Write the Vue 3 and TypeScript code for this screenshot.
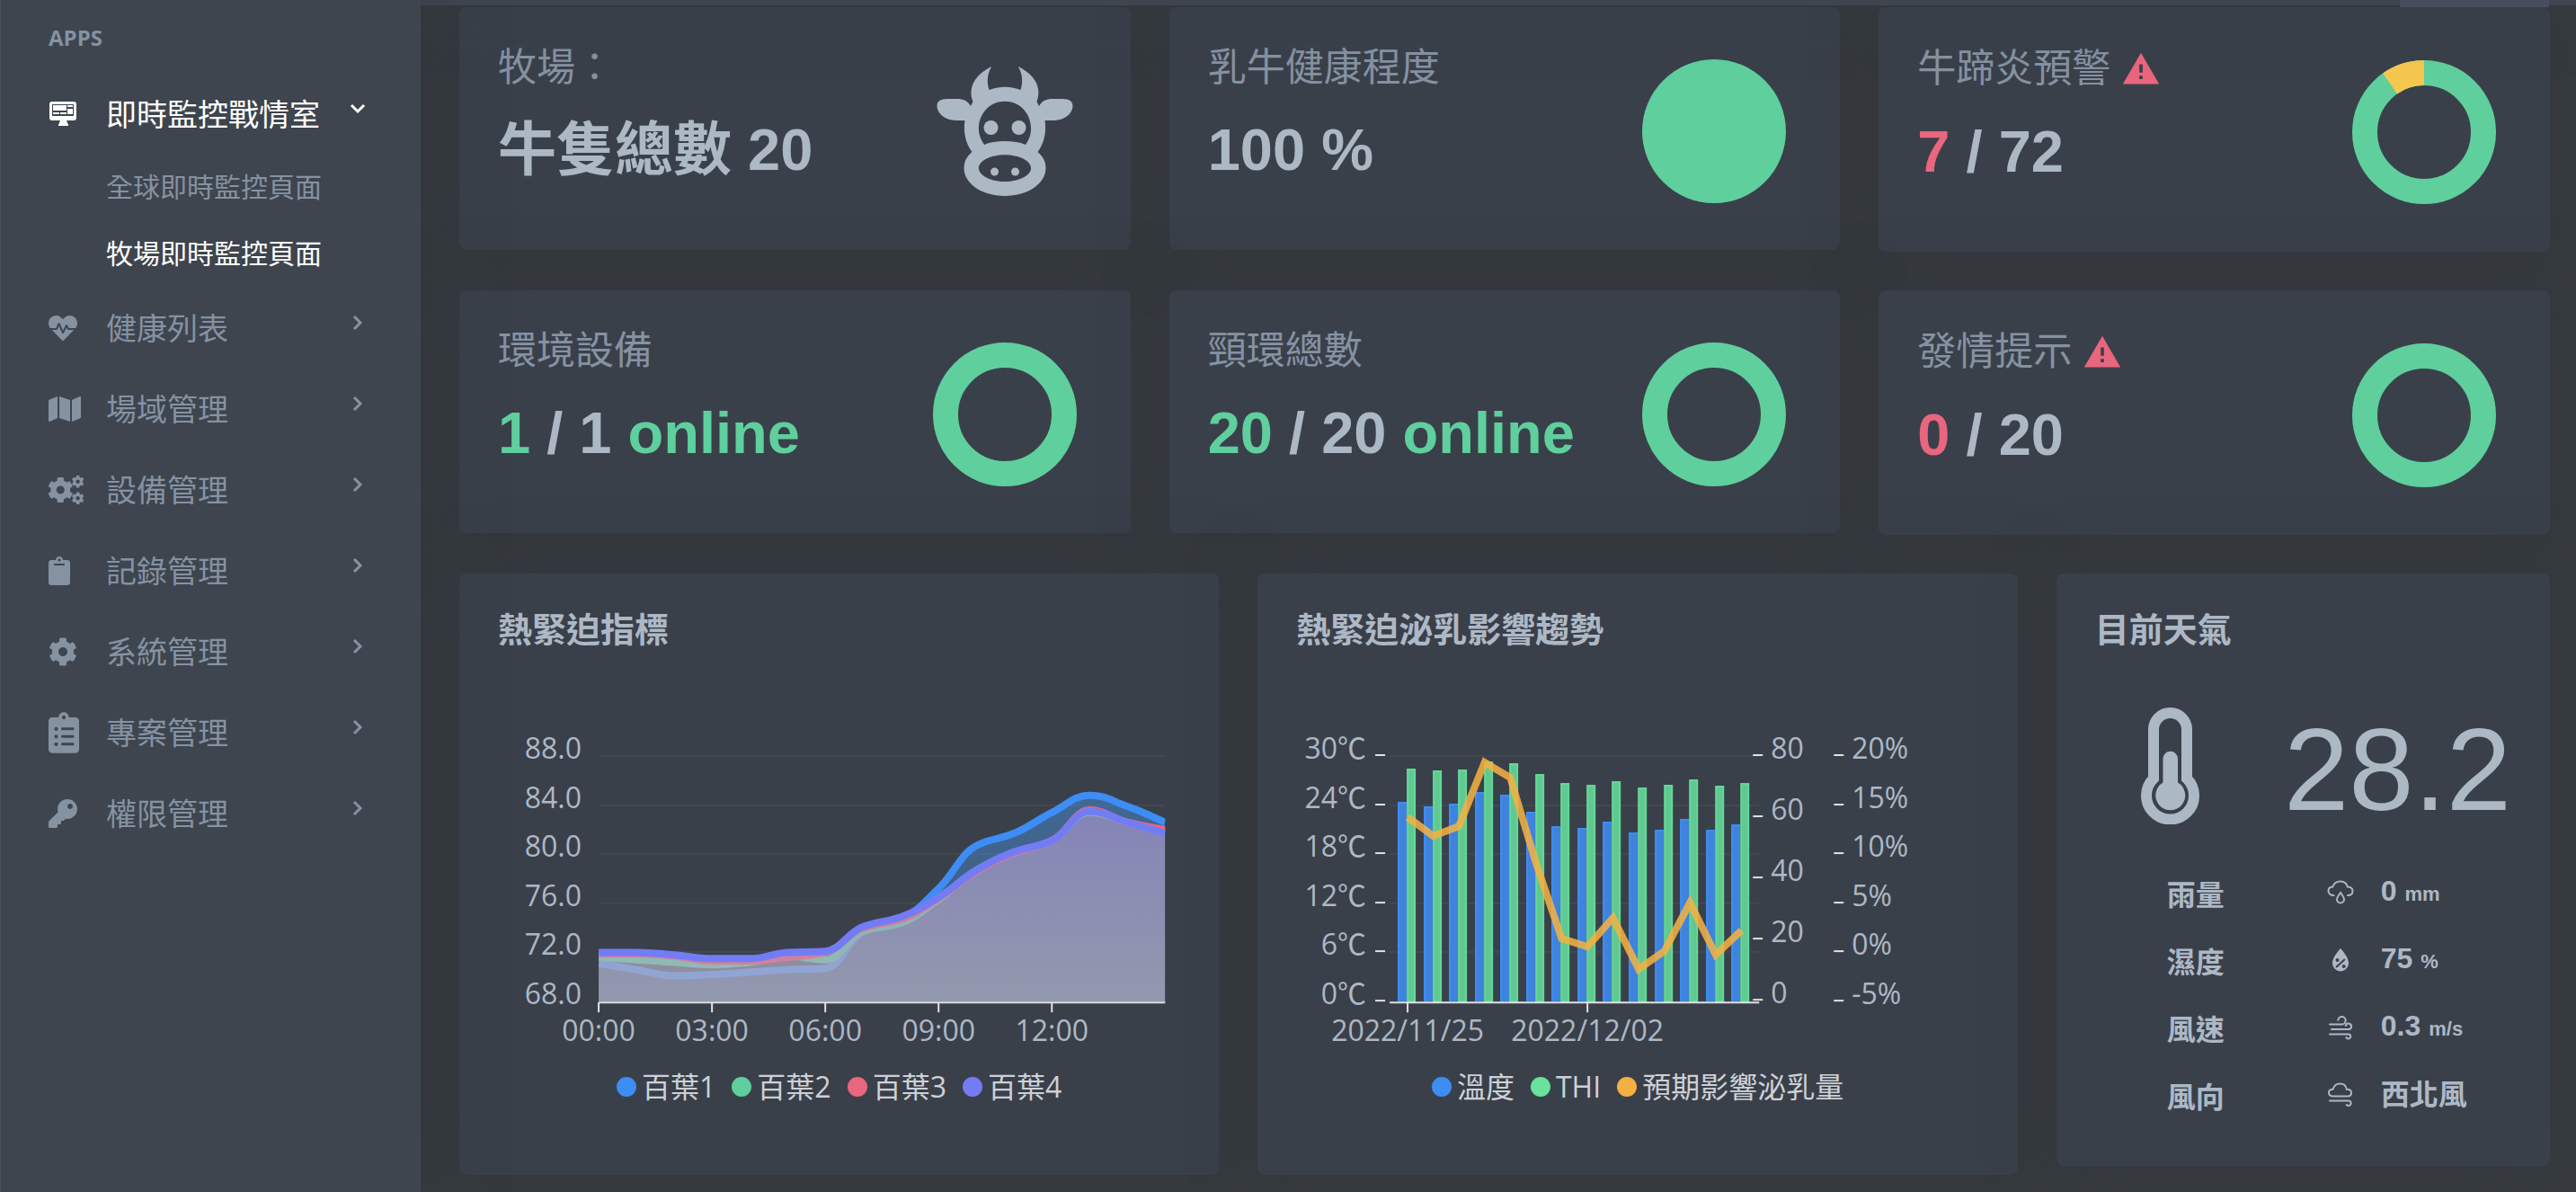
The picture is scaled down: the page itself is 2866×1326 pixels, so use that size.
<script setup lang="ts">
interface MenuItem {
  label: string
  icon: string
  width: number
  height: number
  viewBox: string
}

interface Stat {
  title: string
  alert?: boolean
  parts: { text: string; tone?: 'ok' | 'bad' }[]
  chart: 'cow' | 'disc' | 'ring'
  share?: number
}

type Point = [number, number]

const COG =
  'M487.4 315.7l-42.6-24.6c4.3-23.2 4.3-47 0-70.2l42.6-24.6c4.9-2.8 7.1-8.6 5.5-14-11.1-35.6-30-67.8-54.7-94.6-3.8-4.1-10-5.1-14.8-2.3L380.8 110c-17.9-15.4-38.5-27.3-60.8-35.1V25.8c0-5.6-3.9-10.5-9.4-11.7-36.7-8.2-74.3-7.8-109.2 0-5.5 1.2-9.4 6.1-9.4 11.7V75c-22.2 7.9-42.8 19.8-60.8 35.1L88.7 85.5c-4.9-2.8-11-1.9-14.8 2.3-24.7 26.7-43.6 58.9-54.7 94.6-1.7 5.4.6 11.2 5.5 14L67.3 221c-4.3 23.2-4.3 47 0 70.2l-42.6 24.6c-4.9 2.8-7.1 8.6-5.5 14 11.1 35.6 30 67.8 54.7 94.6 3.8 4.1 10 5.1 14.8 2.3l42.6-24.6c17.9 15.4 38.5 27.3 60.8 35.1v49.2c0 5.6 3.9 10.5 9.4 11.7 36.7 8.2 74.3 7.8 109.2 0 5.5-1.2 9.4-6.1 9.4-11.7v-49.2c22.2-7.9 42.8-19.8 60.8-35.1l42.6 24.6c4.9 2.8 11 1.9 14.8-2.3 24.7-26.7 43.6-58.9 54.7-94.6 1.5-5.5-.7-11.3-5.6-14.1zM256 336c-44.1 0-80-35.9-80-80s35.9-80 80-80 80 35.9 80 80-35.9 80-80 80z'

const menu: MenuItem[] = [
  {
    label: '健康列表',
    width: 32,
    height: 32,
    viewBox: '0 0 512 512',
    icon: 'M320.2 243.8l-49.7 99.4c-6 12.1-23.4 11.7-28.9-.6l-56.9-126.3-30 71.7H60.6l182.5 186.5c7.1 7.3 18.6 7.3 25.7 0L451.4 288H342.3l-22.1-44.2zM473.7 73.9l-2.4-2.5c-51.5-52.6-135.8-52.6-187.4 0L256 100l-27.9-28.5c-51.5-52.7-135.9-52.7-187.4 0l-2.4 2.4C-10.4 123.7-12.5 203 31 256h102.4l35.9-86.2c5.4-12.9 23.6-13.1 29.3-.4l58.2 129.3 49-97.9c5.9-11.8 22.7-11.8 28.6 0l27.6 55.2H481c43.5-53 41.4-132.3-7.3-182.1z',
  },
  {
    label: '場域管理',
    width: 36,
    height: 32,
    viewBox: '0 0 576 512',
    icon: 'M0 117.66v346.32c0 11.32 11.43 19.06 21.94 14.86L160 416V32L20.12 87.95A32.006 32.006 0 0 0 0 117.66zM192 416l192 64V96L192 32v384zM554.06 33.16L416 96v384l139.88-55.95A31.996 31.996 0 0 0 576 394.34V48.02c0-11.32-11.43-19.06-21.94-14.86z',
  },
  { label: '設備管理', width: 40, height: 32, viewBox: '0 0 40 32', icon: 'cogs' },
  {
    label: '記錄管理',
    width: 24,
    height: 32,
    viewBox: '0 0 384 512',
    icon: 'M384 112v352c0 26.51-21.49 48-48 48H48c-26.51 0-48-21.49-48-48V112c0-26.51 21.49-48 48-48h80c0-35.29 28.71-64 64-64s64 28.71 64 64h80c26.51 0 48 21.49 48 48zM192 40c-13.255 0-24 10.745-24 24s10.745 24 24 24 24-10.745 24-24-10.745-24-24-24m96 114v-20a6 6 0 0 0-6-6H102a6 6 0 0 0-6 6v20a6 6 0 0 0 6 6h180a6 6 0 0 0 6-6z',
  },
  { label: '系統管理', width: 32, height: 32, viewBox: '0 0 512 512', icon: COG },
  {
    label: '專案管理',
    width: 34,
    height: 46,
    viewBox: '0 0 384 512',
    icon: 'M336 64h-80c0-35.3-28.7-64-64-64s-64 28.7-64 64H48C21.5 64 0 85.5 0 112v352c0 26.5 21.5 48 48 48h288c26.5 0 48-21.5 48-48V112c0-26.5-21.5-48-48-48zM96 424c-13.3 0-24-10.7-24-24s10.7-24 24-24 24 10.7 24 24-10.7 24-24 24zm0-96c-13.3 0-24-10.7-24-24s10.7-24 24-24 24 10.7 24 24-10.7 24-24 24zm0-96c-13.3 0-24-10.7-24-24s10.7-24 24-24 24 10.7 24 24-10.7 24-24 24zm96-192c13.3 0 24 10.7 24 24s-10.7 24-24 24-24-10.7-24-24 10.7-24 24-24zm128 368c0 4.4-3.6 8-8 8H168c-4.4 0-8-3.6-8-8v-16c0-4.4 3.6-8 8-8h144c4.4 0 8 3.6 8 8v16zm0-96c0 4.4-3.6 8-8 8H168c-4.4 0-8-3.6-8-8v-16c0-4.4 3.6-8 8-8h144c4.4 0 8 3.6 8 8v16zm0-96c0 4.4-3.6 8-8 8H168c-4.4 0-8-3.6-8-8v-16c0-4.4 3.6-8 8-8h144c4.4 0 8 3.6 8 8v16z',
  },
  {
    label: '權限管理',
    width: 32,
    height: 32,
    viewBox: '0 0 512 512',
    icon: 'M512 176.001C512 273.203 433.202 352 336 352c-11.22 0-22.19-1.062-32.827-3.069l-24.012 27.014A23.999 23.999 0 0 1 261.223 384H224v40c0 13.255-10.745 24-24 24h-40v40c0 13.255-10.745 24-24 24H24c-13.255 0-24-10.745-24-24v-78.059c0-6.365 2.529-12.47 7.029-16.971l161.802-161.802C163.108 213.814 160 195.271 160 176 160 78.798 238.797.001 335.999 0 433.488-.001 512 78.511 512 176.001zM336 128c0 26.51 21.49 48 48 48s48-21.49 48-48-21.49-48-48-48-48 21.49-48 48z',
  },
]

const stats: Stat[] = [
  { title: '牧場：', parts: [{ text: '牛隻總數 20' }], chart: 'cow' },
  { title: '乳牛健康程度', parts: [{ text: '100 %' }], chart: 'disc' },
  {
    title: '牛蹄炎預警',
    alert: true,
    parts: [{ text: '7', tone: 'bad' }, { text: ' / 72' }],
    chart: 'ring',
    share: 7 / 72,
  },
  {
    title: '環境設備',
    parts: [{ text: '1', tone: 'ok' }, { text: ' / 1 ' }, { text: 'online', tone: 'ok' }],
    chart: 'ring',
  },
  {
    title: '頸環總數',
    parts: [{ text: '20', tone: 'ok' }, { text: ' / 20 ' }, { text: 'online', tone: 'ok' }],
    chart: 'ring',
  },
  {
    title: '發情提示',
    alert: true,
    parts: [{ text: '0', tone: 'bad' }, { text: ' / 20' }],
    chart: 'ring',
  },
]

/* Slice of the ring that ends at twelve o'clock, running counter-clockwise. */
function slice(share: number): string {
  const a = -Math.PI / 2 - share * Math.PI * 2
  const at = (r: number) => `${80 + r * Math.cos(a)} ${80 + r * Math.sin(a)}`
  return `M${at(80)}A80 80 0 0 1 80 0V28A52 52 0 0 0 ${at(52)}Z`
}

/* Heat index chart: plot area 155..785 by 41..314. */
const yTicks = ['88.0', '84.0', '80.0', '76.0', '72.0', '68.0']
const xTicks = ['00:00', '03:00', '06:00', '09:00', '12:00']
const rowY = (i: number) => Math.round(41 + i * 54.6)

const heat = [
  { name: '百葉1', color: '#3d8df5', fill: 'url(#fill1)', values: [71.1, 70.6, 70.1, 70.2, 70.4, 70.6, 70.7, 73.7, 74.7, 77.2, 80.7, 81.7, 83.4, 84.8, 83.9, 82.6] },
  { name: '百葉2', color: '#5fcf9d', fill: 'url(#fill2)', values: [71.6, 71.4, 71.2, 71.0, 71.2, 71.7, 71.4, 73.7, 74.4, 76.3, 78.7, 80.1, 81.1, 83.4, 82.6, 81.8] },
  { name: '百葉3', color: '#e8667e', fill: 'url(#fill3)', values: [71.9, 71.9, 71.7, 71.3, 71.3, 71.6, 72.0, 74.0, 74.7, 76.4, 78.6, 80.1, 81.1, 83.6, 82.6, 82.0] },
  { name: '百葉4', color: '#727cf5', fill: 'url(#fill4)', values: [72.0, 72.0, 71.8, 71.5, 71.5, 72.0, 72.1, 74.1, 74.9, 76.5, 78.7, 80.2, 81.1, 83.5, 82.6, 81.7] },
]

/* Monotone cubic curve through the points, so that it never overshoots. */
function smooth(p: Point[]): string {
  const n = p.length
  const d = p.slice(1).map((q, i) => (q[1] - p[i][1]) / (q[0] - p[i][0]))
  const m = p.map((_, i) => {
    if (i === 0) return d[0]
    if (i === n - 1) return d[n - 2]
    if (d[i - 1] * d[i] <= 0) return 0
    return (2 * d[i - 1] * d[i]) / (d[i - 1] + d[i])
  })
  let s = `M${p[0][0]} ${p[0][1]}`
  for (let i = 0; i < n - 1; i++) {
    const h = (p[i + 1][0] - p[i][0]) / 2.4
    s += `C${p[i][0] + h} ${p[i][1] + m[i] * h} ${p[i + 1][0] - h} ${p[i + 1][1] - m[i + 1] * h} ${p[i + 1][0]} ${p[i + 1][1]}`
  }
  return s
}

const curves = heat.map((s) => {
  const pts = s.values.map((v, i): Point => [155 + i * 42, 314 - (v - 68) * 13.65])
  const line = smooth(pts)
  return { ...s, line, area: `${line}V314H155Z` }
})

/* Milk yield chart: bar tops and line points in plot units. */
const leftTicks = ['30℃', '24℃', '18℃', '12℃', '6℃', '0℃']
const midTicks = ['80', '60', '40', '20', '0']
const rightTicks = ['20%', '15%', '10%', '5%', '0%', '-5%']
const temperature = [92, 97, 94, 81, 84, 103, 119, 121, 114, 126, 123, 111, 123, 117]
const thi = [55, 57, 56, 47, 49, 61, 71, 73, 69, 76, 73, 67, 74, 71]
const milk = [109, 130, 119, 48, 65, 160, 244, 253, 221, 278, 258, 204, 262, 235]
const barX = (i: number) => Math.round(156 + i * 28.55)
const milkLine = milk.map((y, i) => `${167 + i * 28.55},${y}`).join(' ')
const milkLegend = [
  { name: '溫度', color: '#3d8df5' },
  { name: 'THI', color: '#68e29c' },
  { name: '預期影響泌乳量', color: '#f4b143' },
]

const weather = [
  { label: '雨量', icon: 'rain', value: '0', unit: 'mm' },
  { label: '濕度', icon: 'humidity', value: '75', unit: '%' },
  { label: '風速', icon: 'wind', value: '0.3', unit: 'm/s' },
  { label: '風向', icon: 'cloud', value: '西北風', unit: '' },
]
</script>

<template>
  <div class="page">
    <nav class="sidebar">
      <h2 class="group">APPS</h2>
      <ul class="menu">
        <li>
          <a href="#live" class="item active">
            <span class="icon">
              <svg width="32" height="28" viewBox="0 0 32 28" fill="currentColor">
                <path fill-rule="evenodd" d="M4 0H28a3 3 0 0 1 3 3V18a3 3 0 0 1-3 3H4a3 3 0 0 1-3-3V3a3 3 0 0 1 3-3ZM4 3V16H28V3Z" />
                <path d="M5 4H20V10H5ZM21 4H27V6H21ZM21 8H27V14H21ZM5 12H12V14H5ZM13 12H20V14H13ZM13 21h7l2 5v1H11v-1Z" />
              </svg>
            </span>
            <span class="label">即時監控戰情室</span>
            <svg class="chevron" width="20" height="20" viewBox="0 0 20 20"><path d="M3 6l7 7 7-7" /></svg>
          </a>
          <ul class="submenu">
            <li><a href="#global">全球即時監控頁面</a></li>
            <li><a href="#farm" class="active">牧場即時監控頁面</a></li>
          </ul>
        </li>
        <li v-for="m in menu" :key="m.label">
          <a href="#" class="item">
            <span class="icon">
              <svg :width="m.width" :height="m.height" :viewBox="m.viewBox" fill="currentColor">
                <g v-if="m.icon === 'cogs'">
                  <path :d="COG" transform="translate(-1.2 1.5) scale(.0565)" />
                  <path :d="COG" transform="translate(25.6 -.3) scale(.0275)" />
                  <path :d="COG" transform="translate(25.6 18.2) scale(.0275)" />
                </g>
                <path v-else :d="m.icon" />
              </svg>
            </span>
            <span class="label">{{ m.label }}</span>
            <svg class="chevron" width="20" height="20" viewBox="0 0 20 20"><path d="M6 3l7 7-7 7" /></svg>
          </a>
        </li>
      </ul>
    </nav>

    <div class="content">
      <header class="topbar"><div class="topbar-user"></div></header>
      <main class="board">
        <section v-for="s in stats" :key="s.title" class="card stat">
          <div>
            <h3 class="stat-title">
              {{ s.title }}
              <svg v-if="s.alert" class="alert" width="44" height="44" viewBox="0 0 24 24">
                <path d="M13 14H11V9H13M13 18H11V16H13M1 21H23L12 2L1 21Z" />
              </svg>
            </h3>
            <p class="stat-value"><span v-for="(p, i) in s.parts" :key="i" :class="p.tone">{{ p.text }}</span></p>
          </div>
          <svg v-if="s.chart === 'cow'" class="gauge cow" viewBox="0 0 160 160">
            <g transform="translate(4.5 8)">
              <path
                fill-rule="evenodd"
                d="M60.700 0C42 9 34 24 40 39L37.500 44C34 38 29 36 23 36H12C3 36 0 39 0 44C0 51 8 60 21 60H31C29 73 32 86 39 95C33 100 30 106 30 113C30 130 50 144 75.500 144S121 130 121 113C121 106 118 100 112 95C119 86 122 73 120 60H130C143 60 151 51 151 44C151 39 148 36 139 36H128C122 36 117 38 113.500 44L111 39C117 24 109 9 90.300 0C95 8 96 17 93 26C88 24 82 22.700 75.500 22.700S63 24 58 26C55 17 56 8 60.700 0ZM75.500 38.700C92 38.700 104.600 52 104.600 69C104.600 76 102 82 98.500 87C92 84 84 83 75.500 83S59 84 52.600 87C49 82 46.400 76 46.400 69C46.400 52 59 38.700 75.500 38.700ZM75.500 98.300C91.500 98.300 104.600 105 104.600 113S91.500 128 75.500 128 46.400 121 46.400 113 59.500 98.300 75.500 98.300Z"
              />
              <circle cx="60" cy="68" r="8" /><circle cx="91" cy="68" r="8" />
              <circle cx="64" cy="117" r="4.500" /><circle cx="87" cy="117" r="4.500" />
            </g>
          </svg>
          <svg v-else class="gauge" viewBox="0 0 160 160">
            <circle v-if="s.chart === 'disc'" cx="80" cy="80" r="80" fill="#5fcf9d" />
            <circle v-else cx="80" cy="80" r="66" fill="none" stroke="#5fcf9d" stroke-width="28" />
            <path v-if="s.share" :d="slice(s.share)" fill="#f6c74e" />
          </svg>
        </section>

        <section class="card chart">
          <h3 class="card-title">熱緊迫指標</h3>
          <svg class="plot" viewBox="0 0 845 375">
            <defs>
              <linearGradient id="fill1" x2="0" y2="1">
                <stop offset="0" stop-color="#4790e0" stop-opacity=".5" />
                <stop offset="1" stop-color="#4790e0" stop-opacity=".3" />
              </linearGradient>
              <linearGradient id="fill2" x2="0" y2="1">
                <stop offset="0" stop-color="#90b8b8" stop-opacity=".25" />
                <stop offset="1" stop-color="#b0c8c8" stop-opacity=".3" />
              </linearGradient>
              <linearGradient id="fill3" x2="0" y2="1">
                <stop offset="0" stop-color="#c898a8" stop-opacity=".3" />
                <stop offset="1" stop-color="#c8a8b0" stop-opacity=".3" />
              </linearGradient>
              <linearGradient id="fill4" x2="0" y2="1">
                <stop offset="0" stop-color="#9a84dc" stop-opacity=".4" />
                <stop offset="1" stop-color="#b0b4cc" stop-opacity=".4" />
              </linearGradient>
              <clipPath id="plot1"><rect x="155" y="0" width="630" height="316" /></clipPath>
            </defs>
            <path v-for="(t, i) in yTicks" :key="t" class="grid" :d="`M155 ${rowY(i)}H785`" />
            <text v-for="(t, i) in yTicks" :key="'y' + t" x="136" :y="rowY(i) + 3" text-anchor="end">{{ t }}</text>
            <g clip-path="url(#plot1)">
              <g v-for="c in curves" :key="c.name">
                <path :d="c.area" :fill="c.fill" />
                <path :d="c.line" :stroke="c.color" stroke-width="8" fill="none" />
              </g>
            </g>
            <path class="axis" d="M155 315H785" />
            <g v-for="(t, i) in xTicks" :key="t">
              <path class="axis" :d="`M${155 + i * 126} 315v11`" />
              <text :x="155 + i * 126" y="358" text-anchor="middle">{{ t }}</text>
            </g>
          </svg>
          <ul class="legend">
            <li v-for="c in heat" :key="c.name"><i :style="{ background: c.color }"></i>{{ c.name }}</li>
          </ul>
        </section>

        <section class="card chart">
          <h3 class="card-title">熱緊迫泌乳影響趨勢</h3>
          <svg class="plot" viewBox="0 0 845 375">
            <path v-for="(t, i) in leftTicks" :key="t" class="grid" :d="`M147 ${rowY(i)}H558`" />
            <g v-for="(t, i) in leftTicks" :key="'l' + t">
              <path class="axis" :d="`M131 ${rowY(i) - 1}h11`" />
              <text x="121" :y="rowY(i) + 3" text-anchor="end">{{ t }}</text>
            </g>
            <g v-for="(y, i) in temperature" :key="'b' + i">
              <rect :x="barX(i)" :y="y" width="10" :height="314 - y" fill="#3f83dc" />
              <path :d="`M${barX(i) + 1} 314V${y + 1}h9`" fill="none" stroke="#3d8df5" stroke-width="2" />
              <rect :x="barX(i) + 11" :y="thi[i] + 1" width="8" :height="313 - thi[i]" fill="#62c892" stroke="#62da98" stroke-width="2" />
            </g>
            <polyline :points="milkLine" fill="none" stroke="#f4b143" stroke-opacity=".87" stroke-width="8" stroke-miterlimit="10" />
            <path class="axis" d="M147 315H558M167 315v11M367 315v11" />
            <text x="167" y="358" text-anchor="middle">2022/11/25</text>
            <text x="367" y="358" text-anchor="middle">2022/12/02</text>
            <g v-for="(t, i) in midTicks" :key="'m' + t">
              <path class="axis" :d="`M551 ${40 + i * 68}h11`" />
              <text x="571" :y="44 + i * 68">{{ t }}</text>
            </g>
            <g v-for="(t, i) in rightTicks" :key="'r' + t">
              <path class="axis" :d="`M641 ${rowY(i) - 1}h11`" />
              <text x="661" :y="rowY(i) + 3">{{ t }}</text>
            </g>
          </svg>
          <ul class="legend">
            <li v-for="c in milkLegend" :key="c.name"><i :style="{ background: c.color }"></i>{{ c.name }}</li>
          </ul>
        </section>

        <section class="card weather">
          <h3 class="card-title">目前天氣</h3>
          <div class="now">
            <svg width="65" height="130" viewBox="0 0 65 130">
              <path d="M14 79V24.500a18.500 18.500 0 0 1 37 0V79a26.500 26.500 0 1 1-37 0Z" fill="none" stroke="currentColor" stroke-width="12" />
              <path d="M24.500 57a8 8 0 0 1 16.500 0V83.500a16.500 16.500 0 1 1-16.500 0Z" fill="currentColor" />
            </svg>
            <strong class="degrees">28.2</strong>
          </div>
          <dl class="readings">
            <div v-for="w in weather" :key="w.label">
              <dt>{{ w.label }}</dt>
              <dd>
                <svg width="30" height="28" viewBox="0 0 30 28">
                  <g v-if="w.icon === 'rain'">
                    <path d="M7.500 17C3.500 17 1.500 14.500 1.500 12 1.500 9.500 3.500 7.700 6.300 7.500 7.500 4 10.500 1.500 14.800 1.500c4.200 0 7.200 2.500 8 6 3.500-.2 5.700 2 5.700 4.700 0 2.800-2 4.800-5.500 4.800" />
                    <path d="M15 14c-3 4-4 5.500-4 7.500a4 4 0 0 0 8 0c0-2-1-3.500-4-7.500Z" />
                  </g>
                  <g v-else-if="w.icon === 'humidity'">
                    <path class="solid" fill-rule="evenodd" d="M15 1C9.500 7.500 6 12.500 6 17.500a9 9 0 0 0 18 0C24 12.500 20.500 7.500 15 1ZM11.500 12a2 2 0 1 1 0 4 2 2 0 0 1 0-4ZM18.700 19a2 2 0 1 1 0 4 2 2 0 0 1 0-4ZM19.200 12.200l1.400 1.500-9.800 9-1.400-1.500Z" />
                  </g>
                  <path v-else-if="w.icon === 'wind'" d="M3 10.500H16.500a4.200 4.200 0 1 0-4.200-4.700M5 16H24a3.200 3.200 0 1 0-3.200-4M3 21.500H24a2.500 2.500 0 1 1-2.500 3.500" />
                  <path v-else d="M6.500 15.500C3.500 15.500 2 13.500 2 11.500 2 9.300 3.800 7.800 6.500 7.700 7.700 3.800 10.700 1.500 14.500 1.500c4 0 6.800 2.600 7.300 6.200 3.700-.2 5.200 1.800 5.200 3.800 0 2.300-1.500 4-4 4ZM3 20.500H24.500a2.800 2.800 0 1 1-2.800 4.500" />
                </svg>
                <span>{{ w.value }}<small v-if="w.unit">{{ w.unit }}</small></span>
              </dd>
            </div>
          </dl>
        </section>
      </main>
    </div>
  </div>
</template>

<style>
body {
  margin: 0;
  background: #373b3e;
}
</style>

<style scoped>
.page {
  display: flex;
  min-height: 100vh;
  color: #adb8c5;
  font-family: 'Liberation Sans', 'Noto Sans CJK TC', sans-serif;
}
ul,
dl,
dd,
h2,
h3,
p {
  margin: 0;
  padding: 0;
  list-style: none;
}
a {
  color: inherit;
  text-decoration: none;
}

.sidebar {
  position: relative;
  z-index: 1;
  flex: 0 0 468px;
  box-sizing: border-box;
  border-left: 1px solid #4b525b;
  background: #3e454e;
  box-shadow: 0 0 70px rgba(49, 53, 66, 0.6);
  color: #8592a2;
}
.group {
  padding: 28px 53px 26px;
  font: bold 24px/28px 'Open Sans', sans-serif;
}
.item {
  display: flex;
  align-items: center;
  box-sizing: border-box;
  height: 90px;
  padding: 0 60px 0 53px;
  font-size: 34px;
}
.icon {
  display: flex;
  width: 64px;
}
.label {
  flex: 1;
  padding-bottom: 4px;
}
.chevron {
  margin-bottom: 13px;
  fill: none;
  stroke: currentColor;
  stroke-width: 3px;
}
.submenu a {
  display: block;
  padding-left: 117px;
  font-size: 30px;
  line-height: 74px;
}
.active {
  color: #fff;
}

.content {
  flex: 1;
  min-width: 0;
}
.topbar {
  position: relative;
  height: 6px;
  background: #3e454f;
  box-shadow: 0 0 70px rgba(49, 53, 66, 0.6);
}
.topbar-user {
  position: absolute;
  top: 0;
  right: 30px;
  width: 166px;
  height: 8px;
  background: #474d5a;
}
.board {
  display: grid;
  grid-template-columns: repeat(24, minmax(0, 1fr));
  gap: 43px;
  align-items: start;
  padding: 2px 29px 19px 43px;
}
.card {
  border-radius: 8px;
  background: #3a404a;
  box-shadow: 0 0 70px rgba(49, 53, 66, 0.5);
}

.stat {
  grid-column: span 8;
  display: flex;
  align-items: center;
  justify-content: space-between;
  padding: 43px 60px 37px 43px;
}
.stat-title {
  display: flex;
  align-items: center;
  gap: 12px;
  margin-top: 2px;
  color: #8592a2;
  font-size: 43px;
  font-weight: 400;
  line-height: 44px;
}
.alert {
  margin-top: 2px;
  fill: #e8667e;
}
.stat-value {
  margin: 35px 0 39px;
  font-size: 65px;
  font-weight: 700;
  line-height: 70px;
  white-space: pre;
}
.ok {
  color: #5fcf9d;
}
.bad {
  color: #e8667e;
}
.gauge {
  width: 160px;
  height: 160px;
  overflow: visible;
}
.cow {
  fill: currentColor;
}

.chart {
  grid-column: span 9;
  padding: 38px 0 76px;
}
.card-title {
  padding: 0 43px;
  font-size: 38px;
  line-height: 50px;
}
.plot {
  display: block;
  width: 100%;
  margin: 74px 0 12px;
  fill: #adb8c5;
  font: 32px 'Open Sans', 'Noto Sans CJK TC', sans-serif;
}
.grid {
  stroke: #424852;
  stroke-width: 2px;
}
.axis {
  stroke: #dfe1e4;
  stroke-width: 2px;
}
.legend {
  display: flex;
  justify-content: center;
  gap: 18px;
  color: #cdd1d6;
  font: 32px/44px 'Open Sans', 'Noto Sans CJK TC', sans-serif;
}
.legend li {
  display: flex;
  align-items: center;
  gap: 6px;
}
.legend i {
  width: 22px;
  height: 22px;
  border-radius: 50%;
}

.weather {
  grid-column: span 6;
  padding: 38px 0 42px;
}
.now {
  display: flex;
  align-items: flex-end;
  justify-content: space-between;
  margin: 61px 0 38px;
  padding: 0 43px 0 94px;
}
.degrees {
  font-size: 130px;
  font-weight: 400;
  line-height: 122px;
}
.readings {
  font-size: 32px;
  font-weight: 700;
}
.readings div {
  display: flex;
  align-items: center;
  height: 75px;
  padding-left: 123px;
}
.readings dt {
  width: 178px;
}
.readings dd {
  display: flex;
  align-items: center;
  gap: 30px;
  line-height: 40px;
}
.readings svg {
  fill: none;
  stroke: currentColor;
  stroke-width: 2px;
  stroke-linecap: round;
}
.readings .solid {
  fill: currentColor;
  stroke: none;
}
.readings small {
  margin-left: 9px;
  font-size: 22px;
}
</style>
